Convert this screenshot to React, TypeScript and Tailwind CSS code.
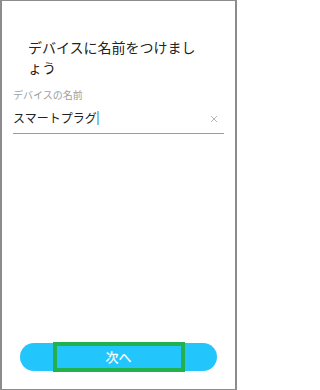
import React from "react";

export default function App() {
  return (
    <div
      className="w-[237px] h-[390px] bg-white border-t border-r-2 border-b border-l-2 border-[#8c8c8c] flex flex-col"
      style={{ fontFamily: '"Noto Sans CJK JP", "Noto Sans", sans-serif' }}
    >
      <h1 className="mt-[36px] ml-[26px] whitespace-nowrap text-[14px] leading-[20px] text-[#222] font-normal">
        デバイスに名前をつけまし
        <br />
        ょう
      </h1>
      <div className="mx-[11px] mt-[11px]">
        <div className="text-[10px] leading-[14px] text-[#9e9e9e]">デバイスの名前</div>
        <div className="mt-[8px] flex items-center pb-[7px]">
          <div className="flex items-center flex-1">
            <span className="text-[12px] leading-[16px] text-[#222]">スマートプラグ</span>
            <span className="w-[2px] h-[14px] bg-[#6fcdf2]" />
          </div>
          <svg width="8" height="8" viewBox="0 0 8 8" className="mr-[6px] mt-[2px]">
            <path d="M1 1L7 7M7 1L1 7" stroke="#b5b5b5" strokeWidth="1" />
          </svg>
        </div>
        <div className="h-[1px] bg-[#35c1ef]" />
      </div>
      <div className="flex-1" />
      <div className="mx-[18px] mb-[18px] relative">
        <button className="w-full h-[28px] rounded-full bg-[#22c6fc] text-white text-[13px] leading-[28px] font-medium">
          次へ
        </button>
        <div className="absolute top-[-1px] bottom-[-1px] left-[33px] w-[132px] border-4 border-[#23b14d] pointer-events-none" />
      </div>
    </div>
  );
}
